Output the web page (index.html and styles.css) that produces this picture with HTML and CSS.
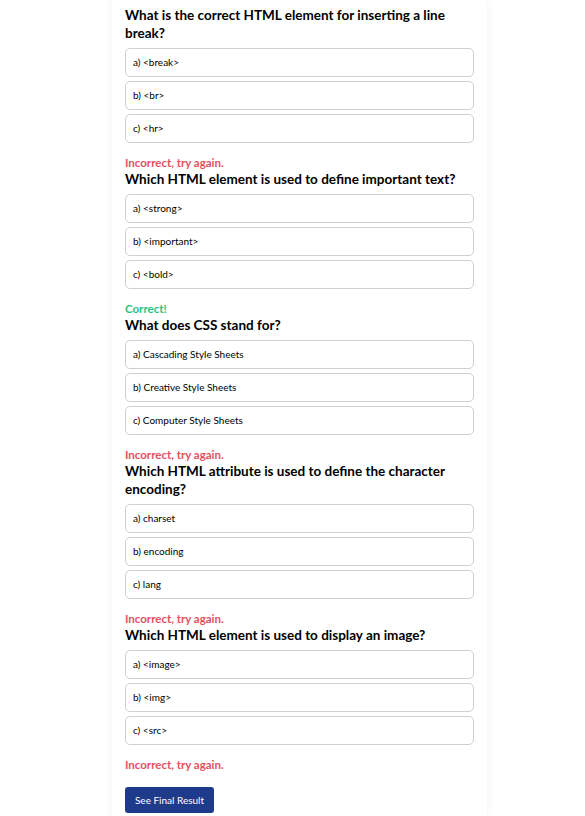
FILE: index.html
```html
<!DOCTYPE html>
<html lang="en">
<head>
<meta charset="utf-8">
<title>Quiz</title>
<link rel="stylesheet" href="styles.css">
</head>
<body>
<div class="card">
  <div class="question">
    <h2 class="q-title">What is the correct HTML element for inserting a line break?</h2>
    <div class="options">
      <div class="option">a) &lt;break&gt;</div>
      <div class="option">b) &lt;br&gt;</div>
      <div class="option">c) &lt;hr&gt;</div>
    </div>
    <p class="feedback wrong">Incorrect, try again.</p>
  </div>
  <div class="question">
    <h2 class="q-title">Which HTML element is used to define important text?</h2>
    <div class="options">
      <div class="option">a) &lt;strong&gt;</div>
      <div class="option">b) &lt;important&gt;</div>
      <div class="option">c) &lt;bold&gt;</div>
    </div>
    <p class="feedback right">Correct!</p>
  </div>
  <div class="question">
    <h2 class="q-title">What does CSS stand for?</h2>
    <div class="options">
      <div class="option">a) Cascading Style Sheets</div>
      <div class="option">b) Creative Style Sheets</div>
      <div class="option">c) Computer Style Sheets</div>
    </div>
    <p class="feedback wrong">Incorrect, try again.</p>
  </div>
  <div class="question">
    <h2 class="q-title">Which HTML attribute is used to define the character encoding?</h2>
    <div class="options">
      <div class="option">a) charset</div>
      <div class="option">b) encoding</div>
      <div class="option">c) lang</div>
    </div>
    <p class="feedback wrong">Incorrect, try again.</p>
  </div>
  <div class="question">
    <h2 class="q-title">Which HTML element is used to display an image?</h2>
    <div class="options">
      <div class="option">a) &lt;image&gt;</div>
      <div class="option">b) &lt;img&gt;</div>
      <div class="option">c) &lt;src&gt;</div>
    </div>
    <p class="feedback wrong last">Incorrect, try again.</p>
  </div>
  <button class="result-btn">See Final Result</button>
</div>
</body>
</html>
```
FILE: styles.css
```css
html, body {
  margin: 0;
  background: #ffffff;
}
body {
  padding: 0 0 0 14px;
  font-family: "Lato", "Noto Sans", sans-serif;
  color: #000;
}
.card {
  width: 375px;
  box-sizing: border-box;
  margin: 0 auto;
  padding: 6px 13px 4px;
  background: #fff;
  box-shadow: 0 0 8px rgba(0, 0, 0, 0.06);
  min-height: 816px;
}
.q-title {
  margin: 0 0 6px;
  font-size: 13.5px;
  line-height: 18px;
  font-weight: 700;
  letter-spacing: 0;
}
.options {
  display: flex;
  flex-direction: column;
  gap: 4px;
}
.option {
  border: 1px solid #cfcfcf;
  border-radius: 5px;
  padding: 8px 7px;
  font-size: 10px;
  line-height: 11px;
  height: 11px;
}
.feedback {
  margin: 13px 0 0;
  font-size: 11.5px;
  line-height: 14px;
  font-weight: 700;
}
.feedback.wrong { color: #e5505f; }
.feedback.right { color: #2dbf7d; }
.feedback.last { margin-bottom: 15px; }
.result-btn {
  display: block;
  background: #1e3a8a;
  color: #fff;
  border: none;
  border-radius: 3px;
  font-family: "Lato", "Noto Sans", sans-serif;
  font-size: 10px;
  line-height: 13px;
  padding: 6px 0;
  width: 89px;
  height: 26px;
  text-align: center;
  cursor: pointer;
}
```
